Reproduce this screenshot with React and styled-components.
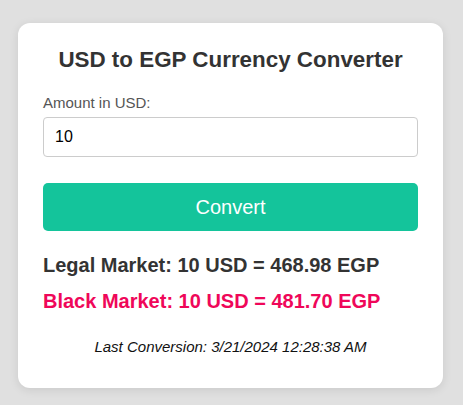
import React from "react";
import styled, { createGlobalStyle } from "styled-components";

const Global = createGlobalStyle`
  html, body { margin: 0; padding: 0; }
  body {
    background: #e0e0e0;
    font-family: "Liberation Sans", Arial, Helvetica, sans-serif;
  }
`;

const Page = styled.div`
  display: flex;
  justify-content: center;
  padding: 23px 2px 0 0;
  min-height: 405px;
  box-sizing: border-box;
`;

const Card = styled.div`
  width: 425px;
  box-sizing: border-box;
  background: #fff;
  border-radius: 12px;
  box-shadow: 0 2px 10px rgba(0, 0, 0, 0.1);
  padding: 24px 25px 33px;
  display: flex;
  flex-direction: column;
  align-self: flex-start;
`;

const Title = styled.h2`
  margin: 0 0 21px;
  font-size: 22.4px;
  font-weight: bold;
  color: #333;
  text-align: center;
`;

const Label = styled.label`
  display: block;
  font-size: 15px;
  color: #555;
  margin-bottom: 6px;
`;

const Input = styled.input`
  width: 100%;
  box-sizing: border-box;
  padding: 10px 11px;
  font-size: 16px;
  font-family: inherit;
  color: #000;
  border: 1px solid #ccc;
  border-radius: 4px;
  outline: none;
`;

const Button = styled.button`
  margin-top: 26px;
  width: 100%;
  height: 48px;
  background: #14c49b;
  color: #fff;
  font-size: 20px;
  font-family: inherit;
  border: none;
  border-radius: 5px;
  cursor: pointer;
`;

const Result = styled.p`
  margin: ${(p) => (p.$first ? "23px" : "13px")} 0 0;
  font-size: 20px;
  font-weight: bold;
  color: ${(p) => p.$color};
`;

const Last = styled.p`
  margin: 25px 0 0;
  font-size: 15px;
  font-style: italic;
  color: #111;
  text-align: center;
`;

export default function App() {
  return (
    <>
      <Global />
      <Page>
        <Card>
          <Title>USD to EGP Currency Converter</Title>
          <Label htmlFor="amount">Amount in USD:</Label>
          <Input id="amount" type="text" defaultValue="10" />
          <Button>Convert</Button>
          <Result $first $color="#333">Legal Market: 10 USD = 468.98 EGP</Result>
          <Result $color="#ef0759">Black Market: 10 USD = 481.70 EGP</Result>
          <Last>Last Conversion: 3/21/2024 12:28:38 AM</Last>
        </Card>
      </Page>
    </>
  );
}
